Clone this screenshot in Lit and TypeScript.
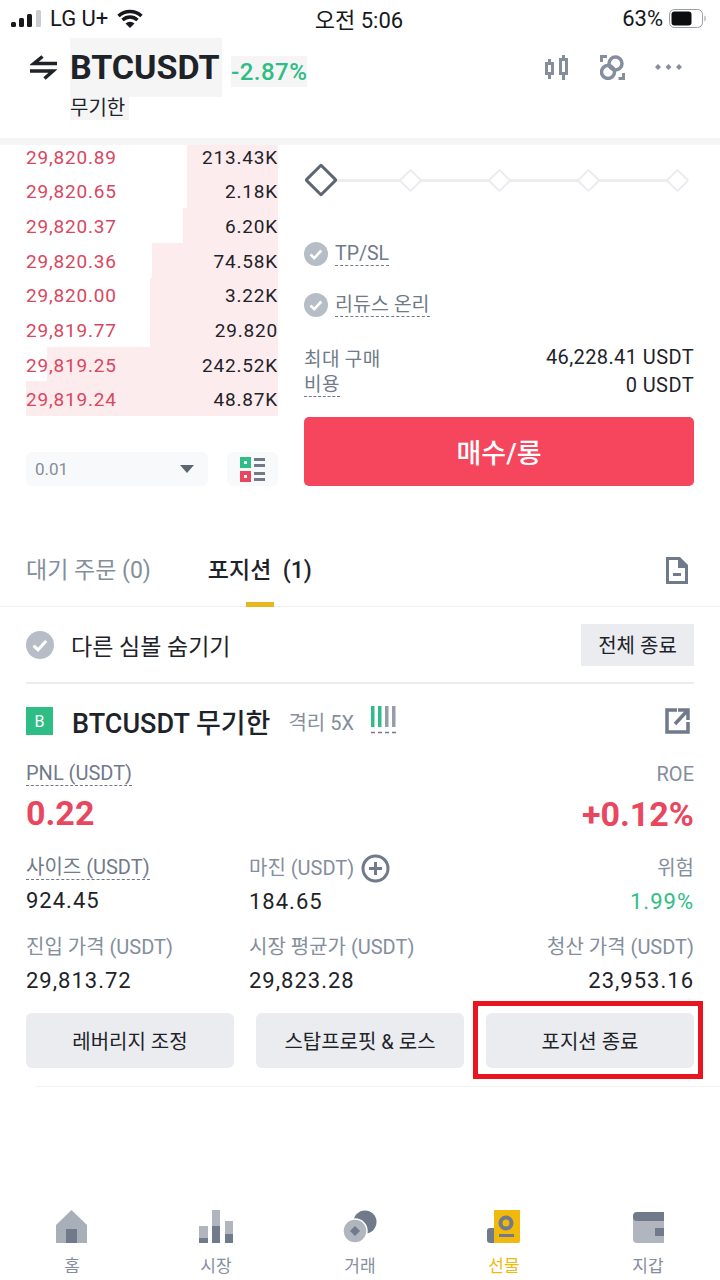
import { LitElement, html, css, svg } from 'lit';
import { customElement } from 'lit/decorators.js';

const book = [
  ['29,820.89', '213.43K', 91],
  ['29,820.65', '2.18K', 91],
  ['29,820.37', '6.20K', 95],
  ['29,820.36', '74.58K', 126],
  ['29,820.00', '3.22K', 128],
  ['29,819.77', '29.820', 128],
  ['29,819.25', '242.52K', 231],
  ['29,819.24', '48.87K', 252],
] as const;

const tabIcons = [
  svg`<path d="M16.500 0 L32 15 V33 H1 V15 Z" fill="#a9afb8"/><rect x="11" y="19" width="11" height="14" fill="#707a8a"/>`,
  svg`<path d="M0 16h9v17H0zM13 0h8v33h-8zM26 11h8v22h-8z" fill="#b0b5be"/><path d="M0 28h9v5H0zM13 16h8v17h-8zM26 24h8v9h-8z" fill="#707a8a"/>`,
  svg`<circle cx="22" cy="12" r="11.500" fill="#707a8a"/><circle cx="12" cy="21" r="12" fill="#b0b5be" stroke="#fff" stroke-width="1.500"/><path d="M12 16l5 5-5 5-5-5z" fill="#707a8a"/>`,
  svg`<path d="M0 21a3 3 0 0 1 3-3h6v15H3a3 3 0 0 1-3-3z" fill="#707a8a"/><path d="M7 0h26v31a2 2 0 0 1-2 2H7z" fill="#f0b90b"/><circle cx="19" cy="13" r="5.500" fill="none" stroke="#707a8a" stroke-width="4"/><circle cx="19" cy="13" r="1.500" fill="#f0b90b"/><rect x="12" y="24" width="15" height="3" fill="#707a8a"/>`,
  svg`<path d="M2 6h31v27H6a4 4 0 0 1-4-4z" fill="#b0b5be"/><path d="M6 2h27v9H6a4 4 0 0 1-4-4V6a4 4 0 0 1 4-4z" fill="#707a8a"/><rect x="24" y="18" width="9" height="8" fill="#707a8a"/>`,
];
const tabLabels = ['홈', '시장', '거래', '선물', '지갑'];

const check = (size: number) => html`<svg class="check" width=${size} height=${size} viewBox="0 0 24 24">
  <circle cx="12" cy="12" r="12" fill="#b7bdc6"/>
  <path d="M6.500 12.500l3.800 3.600 7-7.600" fill="none" stroke="#fff" stroke-width="2.600"/>
</svg>`;

@customElement('app-root')
export class AppRoot extends LitElement {
  static styles = css`
    :host {
      display: block;
      width: 720px;
      height: 1280px;
      overflow: hidden;
      background: #fff;
      color: #1e2329;
      font-family: Roboto, "Noto Sans CJK KR", sans-serif;
    }
    .page {
      display: flex;
      flex-direction: column;
      height: 1280px;
    }

    /* status bar */
    .status {
      display: grid;
      grid-template-columns: 1fr auto 1fr;
      align-items: center;
      height: 36px;
      padding: 0 13px 0 11px;
      font-size: 22px;
      color: #16181c;
    }
    .status-left, .status-right {
      display: flex;
      align-items: center;
    }
    .status-left { gap: 9px; }
    .status-right { justify-content: flex-end; gap: 6px; }

    /* header */
    .header {
      display: flex;
      height: 100px;
      padding: 2px 38px 0 30px;
      border-bottom: 7px solid #f5f5f5;
    }
    .swap { margin: 17px 13px 0 0; }
    .name { display: flex; flex-direction: column; align-items: flex-start; }
    .symbol {
      background: #f5f5f5;
      font-size: 34px;
      font-weight: 700;
      line-height: 59px;
      height: 59px;
      width: 152px;
      white-space: nowrap;
    }
    .sub {
      background: #f5f5f5;
      font-size: 20px;
      line-height: 23px;
      width: 59px;
      white-space: nowrap;
    }
    .change {
      margin: 18px 0 0 9px;
      height: 31px;
      line-height: 33px;
      background: #f5f5f5;
      color: #2ebd85;
      font-size: 24px;
      font-weight: 500;
      letter-spacing: 0.5px;
    }
    .tools {
      display: flex;
      gap: 30px;
      margin-left: auto;
      padding-top: 17px;
      align-items: flex-start;
    }

    /* order form */
    .order {
      display: grid;
      grid-template-columns: 252px 390px;
      justify-content: space-between;
      padding: 0 26px;
      height: 357px;
      overflow: hidden;
    }
    .rows {
      display: flex;
      flex-direction: column;
      margin-top: -6px;
    }
    .row {
      display: flex;
      justify-content: space-between;
      align-items: center;
      box-sizing: border-box;
      height: 34.65px;
      padding-top: 2px;
      font-size: 19px;
      letter-spacing: 0.8px;
      background-image: linear-gradient(#fcecee, #fcecee);
      background-repeat: no-repeat;
      background-position: right top;
    }
    .price { color: #d9475f; }
    .precision {
      display: flex;
      justify-content: space-between;
      margin-top: 36px;
    }
    .select {
      display: flex;
      align-items: center;
      justify-content: space-between;
      box-sizing: border-box;
      width: 182px;
      height: 34px;
      padding: 0 14px 0 9px;
      background: #f8f9fa;
      border-radius: 6px;
      color: #848e9c;
      font-size: 17px;
    }
    .arrow {
      width: 0;
      height: 0;
      border-left: 7px solid transparent;
      border-right: 7px solid transparent;
      border-top: 8px solid #5e6673;
    }
    .view {
      display: flex;
      align-items: center;
      justify-content: center;
      width: 51px;
      height: 34px;
      background: #f8f9fa;
      border-radius: 6px;
    }
    .form { display: flex; flex-direction: column; }
    .slider {
      display: flex;
      justify-content: space-between;
      align-items: center;
      height: 26px;
      margin-top: 22px;
      padding: 0 8px 0 5px;
      background: linear-gradient(#eceded, #eceded) center / 100% 3px no-repeat;
      background-origin: content-box;
    }
    .dot {
      width: 13px;
      height: 13px;
      background: #fff;
      border: 2px solid #eaecef;
      border-radius: 2px;
      transform: rotate(45deg);
    }
    .dot.on {
      width: 18px;
      height: 18px;
      border: 3px solid #5e6673;
      margin-right: -3px;
    }
    .opt {
      display: flex;
      align-items: center;
      gap: 7px;
      height: 26px;
      font-size: 19.500px;
      color: #707a8a;
      margin-top: 25px;
    }
    .opt.first { margin-top: 48px; }
    .dash {
      border-bottom: 1px dashed #707a8a;
      line-height: 22px;
    }
    .fact {
      display: flex;
      justify-content: space-between;
      align-items: center;
      height: 28px;
      font-size: 20px;
      letter-spacing: 0.4px;
    }
    .fact span:first-child { color: #707a8a; font-size: 19px; }
    .facts { margin-top: 25px; }
    .buy {
      display: flex;
      align-items: center;
      justify-content: center;
      height: 69px;
      margin-top: 18px;
      background: #f6465d;
      border-radius: 5px;
      color: #fff;
      font-size: 27px;
      font-weight: 500;
    }

    /* tabs */
    .tabs {
      display: flex;
      align-items: flex-start;
      height: 105px;
      box-sizing: border-box;
      padding: 53px 32px 0 26px;
      border-bottom: 1px solid #f0f0f0;
      font-size: 23px;
    }
    .tab { color: #848e9c; line-height: 32px; }
    .tab.on {
      position: relative;
      margin-left: 57px;
      color: #1e2329;
      font-weight: 500;
      height: 52px;
    }
    .tab.on::after {
      content: "";
      position: absolute;
      left: 38px;
      bottom: 0;
      width: 28px;
      height: 5px;
      background: #e8b71d;
    }
    .doc { margin-left: auto; margin-top: 2px; }

    /* position card */
    .card { padding: 0 26px; }
    .filter {
      display: flex;
      align-items: center;
      gap: 17px;
      height: 75px;
      border-bottom: 2px solid #eaecef;
      font-size: 23px;
    }
    .close-all {
      display: flex;
      align-items: center;
      justify-content: center;
      width: 113px;
      height: 42px;
      margin-left: auto;
      background: #eaecef;
      font-size: 20px;
    }
    .title {
      display: flex;
      align-items: center;
      height: 74px;
    }
    .badge {
      display: flex;
      align-items: center;
      justify-content: center;
      width: 27px;
      height: 28px;
      background: #2ebd85;
      color: #fff;
      font-size: 16px;
    }
    .title-text { margin-left: 19px; font-size: 27px; font-weight: 500; }
    .lev { margin-left: 18px; color: #848e9c; font-size: 20px; }
    .bars { margin: 0 0 2px 17px; }
    .export { margin-left: auto; margin-right: 4px; }
    .pnl {
      display: flex;
      justify-content: space-between;
      height: 94px;
      margin-top: 3px;
    }
    .col { display: flex; flex-direction: column; }
    .end { align-items: flex-end; text-align: right; }
    .label { color: #848e9c; font-size: 20px; line-height: 26px; white-space: nowrap; }
    .label.dash { align-self: flex-start; line-height: 24px; color: #707a8a; }
    .big {
      margin-top: 8px;
      color: #e8475f;
      font-size: 34px;
      font-weight: 700;
      line-height: 38px;
    }
    .stats {
      display: grid;
      grid-template-columns: 223px 1fr auto;
      grid-auto-rows: 79px;
    }
    .val {
      margin-top: 8px;
      font-size: 22px;
      line-height: 26px;
      letter-spacing: 1px;
      white-space: nowrap;
    }
    .val.up { color: #2ebd85; }
    .plus { display: flex; align-items: center; gap: 7px; height: 26px; }
    .actions {
      display: grid;
      grid-template-columns: repeat(3, 208px);
      justify-content: space-between;
    }
    .action {
      position: relative;
      display: flex;
      align-items: center;
      justify-content: center;
      height: 55px;
      background: #eaecef;
      border-radius: 6px;
      font-size: 20px;
    }
    .marker {
      position: absolute;
      inset: -12px -9px -11px -13px;
      border: 5px solid #e8141f;
    }
    .rule {
      margin: 18px 0 0 36px;
      border-top: 1px solid #f2f2f2;
    }

    /* bottom nav */
    .nav {
      display: grid;
      grid-template-columns: repeat(5, 144px);
      margin-top: auto;
      height: 70px;
    }
    .nav-item {
      display: flex;
      flex-direction: column;
      align-items: center;
      color: #848e9c;
      font-size: 17px;
    }
    .nav-item.on { color: #f0b90b; }
    .nav-item span { margin-top: 11px; line-height: 24px; }
  `;

  render() {
    return html`
      <div class="page">
        <div class="status">
          <div class="status-left">
            <svg width="30" height="17" viewBox="0 0 30 17">
              <rect x="0" y="12" width="5" height="5" rx="1.500" fill="#16181c"/>
              <rect x="8" y="8" width="5" height="9" rx="1.500" fill="#16181c"/>
              <rect x="16" y="4" width="5" height="13" rx="1.500" fill="#16181c"/>
              <rect x="25" y="0" width="5" height="17" rx="1.500" fill="#c9ccd0"/>
            </svg>
            LG U+
            <svg width="26" height="19" viewBox="0 0 26 19">
              <path d="M1.500 7c6.500-6 16.500-6 23 0M5.500 11c4.500-4 10.500-4 15 0" fill="none" stroke="#16181c" stroke-width="3.500"/>
              <path d="M13 19l-4.500-4.500a6.500 6.500 0 0 1 9 0z" fill="#16181c"/>
            </svg>
          </div>
          <div>오전 5:06</div>
          <div class="status-right">
            63%
            <svg width="38" height="19" viewBox="0 0 38 19">
              <rect x="0.500" y="0.500" width="33" height="18" rx="5" fill="none" stroke="#9a9da1"/>
              <rect x="2.500" y="2.500" width="20" height="14" rx="3" fill="#0c0d0f"/>
              <path d="M35.500 6.500c1.500.5 1.500 5.500 0 6z" fill="#9a9da1"/>
            </svg>
          </div>
        </div>

        <div class="header">
          <svg class="swap" width="27" height="25" viewBox="0 0 27 25" fill="none" stroke="#1e2329" stroke-width="3.500">
            <path d="M27 8.500H4L12.500 1.500M0 16H23L14.500 23.500"/>
          </svg>
          <div class="name">
            <div class="symbol">BTCUSDT</div>
            <div class="sub">무기한</div>
          </div>
          <div class="change">-2.87%</div>
          <div class="tools">
            <svg width="25" height="25" viewBox="0 0 25 25" fill="none" stroke="#848e9c" stroke-width="3">
              <rect x="1.500" y="8.500" width="6" height="10"/><path d="M4.500 4v5M4.500 18v6"/>
              <rect x="15.500" y="4.500" width="6" height="14"/><path d="M18.500 0v5M18.500 18v7"/>
            </svg>
            <svg width="25" height="25" viewBox="0 0 25 25" fill="none" stroke="#848e9c">
              <circle cx="15.500" cy="8.500" r="6.500" stroke-width="3.500"/><circle cx="8" cy="17" r="6.500" stroke-width="3.500"/>
              <path d="M1.500 7V1.500H7M23.500 18v5.500h-5" stroke-width="3"/>
            </svg>
            <svg width="27" height="25" viewBox="0 0 27 25" fill="#848e9c">
              <path d="M3 9l3 3-3 3-3-3zM13.500 9l3 3-3 3-3-3zM24 9l3 3-3 3-3-3z"/>
            </svg>
          </div>
        </div>

        <div class="order">
          <div>
            <div class="rows">
              ${book.map(
                ([price, size, depth]) => html`<div class="row" style="background-size:${depth}px 100%">
                  <span class="price">${price}</span><span>${size}</span>
                </div>`
              )}
            </div>
            <div class="precision">
              <div class="select">0.01<i class="arrow"></i></div>
              <div class="view">
                <svg width="26" height="25" viewBox="0 0 26 25">
                  <rect x="0" y="0" width="11" height="11" fill="#2ebd85"/><rect x="4" y="4" width="3" height="3" fill="#f3f5f6"/>
                  <rect x="0" y="14" width="11" height="11" fill="#e8475f"/><rect x="4" y="18" width="3" height="3" fill="#f3f5f6"/>
                  <path d="M14 1h11v3H14zM14 7h11v3H14zM14 15h11v3H14zM14 21h11v3H14z" fill="#707a8a"/>
                </svg>
              </div>
            </div>
          </div>
          <div class="form">
            <div class="slider">
              <i class="dot on"></i><i class="dot"></i><i class="dot"></i><i class="dot"></i><i class="dot"></i>
            </div>
            <div class="opt first">${check(24)}<span class="dash">TP/SL</span></div>
            <div class="opt">${check(24)}<span class="dash">리듀스 온리</span></div>
            <div class="facts">
              <div class="fact"><span>최대 구매</span><span>46,228.41 USDT</span></div>
              <div class="fact"><span class="dash">비용</span><span>0 USDT</span></div>
            </div>
            <div class="buy">매수/롱</div>
          </div>
        </div>

        <div class="tabs">
          <div class="tab">대기 주문 (0)</div>
          <div class="tab on">포지션&nbsp; (1)</div>
          <svg class="doc" width="22" height="27" viewBox="0 0 22 27" fill="#707a8a">
            <path fill-rule="evenodd" d="M0 0h14l8 8v19H0zM3 3v21h16V11h-7V3zM7 16h8v3H7z"/>
            <path d="M14 3l5 5h-5z"/>
          </svg>
        </div>

        <div class="card">
          <div class="filter">
            ${check(28)}
            <span>다른 심볼 숨기기</span>
            <div class="close-all">전체 종료</div>
          </div>
          <div class="title">
            <div class="badge">B</div>
            <div class="title-text">BTCUSDT 무기한</div>
            <div class="lev">격리 5X</div>
            <svg class="bars" width="26" height="28" viewBox="0 0 26 28">
              <path d="M0 0h3.500v21H0zM7 0h3.500v21H7z" fill="#2ebd85"/>
              <path d="M14 0h3.500v21H14zM21 0h3.500v21H21z" fill="#959da9"/>
              <path d="M0 26.500h25" stroke="#707a8a" stroke-width="1.500" stroke-dasharray="4 3"/>
            </svg>
            <svg class="export" width="25" height="26" viewBox="0 0 25 26" fill="none" stroke="#707a8a" stroke-width="3.500">
              <path d="M12 2H2v22h21V14M10 16L22 3M13 2h10v10"/>
            </svg>
          </div>

          <div class="pnl">
            <div class="col">
              <span class="label dash">PNL (USDT)</span>
              <span class="big">0.22</span>
            </div>
            <div class="col end">
              <span class="label">ROE</span>
              <span class="big">+0.12%</span>
            </div>
          </div>

          <div class="stats">
            <div class="col">
              <span class="label dash">사이즈 (USDT)</span>
              <span class="val">924.45</span>
            </div>
            <div class="col">
              <div class="plus label">
                마진 (USDT)
                <svg width="29" height="29" viewBox="0 0 29 29" fill="none" stroke="#707a8a" stroke-width="3">
                  <circle cx="14.500" cy="14.500" r="12.500"/><path d="M8 14.500h13M14.500 8v13"/>
                </svg>
              </div>
              <span class="val">184.65</span>
            </div>
            <div class="col end">
              <span class="label">위험</span>
              <span class="val up">1.99%</span>
            </div>
            <div class="col">
              <span class="label">진입 가격 (USDT)</span>
              <span class="val">29,813.72</span>
            </div>
            <div class="col">
              <span class="label">시장 평균가 (USDT)</span>
              <span class="val">29,823.28</span>
            </div>
            <div class="col end">
              <span class="label">청산 가격 (USDT)</span>
              <span class="val">23,953.16</span>
            </div>
          </div>

          <div class="actions">
            <div class="action">레버리지 조정</div>
            <div class="action">스탑프로핏 & 로스</div>
            <div class="action">포지션 종료<i class="marker"></i></div>
          </div>
        </div>
        <div class="rule"></div>

        <nav class="nav">
          ${tabLabels.map(
            (label, i) => html`<div class="nav-item ${i === 3 ? 'on' : ''}">
              <svg width="34" height="33" viewBox="0 0 34 33">${tabIcons[i]}</svg>
              <span>${label}</span>
            </div>`
          )}
        </nav>
      </div>
    `;
  }
}
